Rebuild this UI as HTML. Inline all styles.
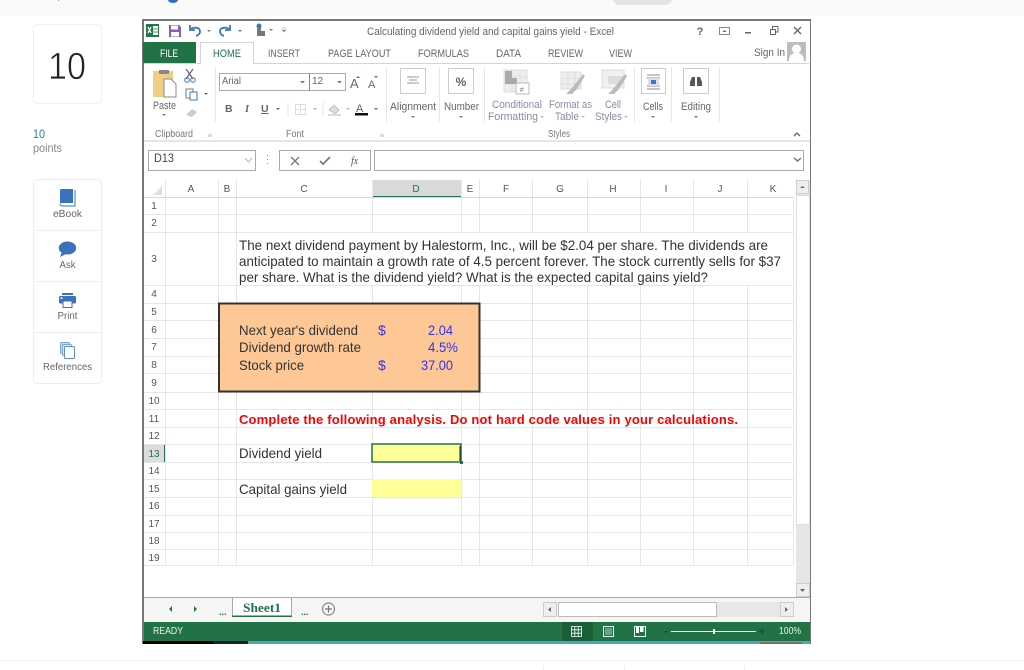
<!DOCTYPE html>
<html><head><meta charset="utf-8"><title>Calculating dividend yield</title>
<style>
html,body{margin:0;padding:0;background:#fff;width:1024px;height:670px;overflow:hidden}
svg{display:block;font-family:"Liberation Sans",Arial,sans-serif}
.u{font-size:11px;fill:#666}
.g{font-size:10.5px;fill:#777}
.h{font-size:10px;fill:#555;text-anchor:middle}
.b{font-size:14px;fill:#333}
.p{font-size:14px;fill:#3333ee}
.s{font-size:10px;fill:#666;text-anchor:middle}
</style></head><body>
<svg width="1024" height="670" viewBox="0 0 1024 670" xmlns="http://www.w3.org/2000/svg">
<!-- page top -->
<rect x="0" y="0" width="1024" height="16" fill="#fafafa"/>
<rect x="58" y="0" width="1" height="1" fill="#999"/>
<path d="M168 0h10a5 3 0 0 1-10 0z" fill="#2f6fc4"/>
<path d="M613 0h59c-1 3-3 5-7 5h-45c-4 0-6-2-7-5z" fill="#e4e3e6"/>
<!-- sidebar -->
<rect x="33.5" y="24.5" width="68" height="79" rx="4" fill="#fff" stroke="#f0f0f0"/>
<text x="48" y="79" font-size="38" fill="#222" stroke="#fff" stroke-width=".7" textLength="38" lengthAdjust="spacingAndGlyphs">10</text>
<text x="33" y="138" font-size="12" fill="#3b6fb0" textLength="12" lengthAdjust="spacingAndGlyphs">10</text>
<text x="33" y="152" font-size="12" fill="#888" textLength="29" lengthAdjust="spacingAndGlyphs">points</text>
<rect x="33.5" y="179.5" width="68" height="204" rx="4" fill="#fff" stroke="#ededed"/>
<path d="M34 230.5h67M34 281.5h67M34 332.5h67" stroke="#eee"/>
<path d="M60 190a2 2 0 0 1 2-1h11v14H62a2 2 0 0 0-2 1z" fill="#3a72bb"/><path d="M60 204a2 2 0 0 0 2 2h13v-16" fill="none" stroke="#3a72bb" stroke-width="1"/>
<text x="67.5" y="217" class="s" textLength="29" lengthAdjust="spacingAndGlyphs">eBook</text>
<ellipse cx="67.5" cy="248" rx="8.7" ry="6.5" fill="#3a72bb"/><path d="M62 252l-2 5 6-3z" fill="#3a72bb"/>
<text x="67.5" y="268" class="s" textLength="16" lengthAdjust="spacingAndGlyphs">Ask</text>
<rect x="62" y="293" width="11" height="2" fill="#3a72bb"/><rect x="59" y="296" width="17" height="7.5" rx="1.5" fill="#3a72bb"/><rect x="63" y="301" width="9" height="6.5" fill="#fff" stroke="#3a72bb"/><rect x="60.5" y="297.5" width="2" height="1.5" fill="#fff"/>
<text x="67.5" y="319" class="s" textLength="20" lengthAdjust="spacingAndGlyphs">Print</text>
<rect x="60.5" y="342.5" width="9" height="11" rx="1" fill="#cfdcef" stroke="#7fa5d6"/><rect x="62.5" y="344.5" width="9" height="11" rx="1" fill="#dfe8f5" stroke="#7fa5d6"/><rect x="64.5" y="346.5" width="10" height="12" rx="1" fill="#fff" stroke="#5f8fcc"/>
<text x="67.5" y="370" class="s" textLength="49" lengthAdjust="spacingAndGlyphs">References</text>
<!-- window -->
<rect x="143" y="20" width="667" height="621" fill="#fff"/>
<rect x="142" y="19" width="669" height="2" fill="#777"/>
<rect x="142" y="19" width="2" height="625" fill="#777"/>
<rect x="810" y="19" width="1" height="625" fill="#777"/>
<!-- QAT -->
<rect x="146" y="24" width="13" height="13" fill="#1f7a45"/><rect x="153" y="26" width="5" height="9" fill="#fff"/><path d="M148 27l3 6M151 27l-3 6" stroke="#fff" stroke-width="1.3"/><path d="M153 29h5M153 32h5" stroke="#1f7a45" stroke-width=".7"/>
<path d="M169 25h10l2 2v10h-12z" fill="#8a5fb5"/><rect x="171" y="25.5" width="7" height="4" fill="#fff"/><rect x="171" y="32" width="8" height="4.500" fill="#fff"/>
<path d="M190 25v5h5M190.500 30c2-3.500 9-3 9.500 1 .3 2.500-2 4.500-4 5" fill="none" stroke="#3b78bd" stroke-width="1.800"/>
<path d="M207 30l2 2 2-2z" fill="#777"/>
<path d="M230 25v5h-5M229.500 30c-2-3.500-9-3-9.500 1-.3 2.500 2 4.500 4 5" fill="none" stroke="#3b78bd" stroke-width="1.800"/>
<path d="M238 30l2 2 2-2z" fill="#777"/>
<circle cx="259" cy="26" r="2.500" fill="#3a78b8"/><path d="M257 28h4v3h4v5h-8z" fill="#777"/>
<path d="M269 29l2 2 2-2z" fill="#777"/><path d="M282 28h4M282 30l2 2 2-2z" stroke="#999" fill="#777" stroke-width=".6"/>
<text x="367" y="35" font-size="11" fill="#666" textLength="247" lengthAdjust="spacingAndGlyphs">Calculating dividend yield and capital gains yield - Excel</text>
<text x="700" y="35" font-size="11" font-weight="bold" fill="#666" text-anchor="middle">?</text>
<rect x="719.5" y="27.5" width="10" height="7" fill="#fff" stroke="#888"/><path d="M722.5 32l2-2 2 2z" fill="#666"/>
<rect x="745" y="32" width="6" height="1.5" fill="#666"/>
<path d="M770.5 29.5h5v5h-5zM772.500 29v-2.500h5.500v5.500h-2" fill="none" stroke="#666"/>
<path d="M794 27l7 7M801 27l-7 7" stroke="#666" stroke-width="1.400"/>
<!-- tabs -->
<rect x="143" y="42" width="53" height="21" fill="#217346"/>
<text x="160" y="57" font-size="11" fill="#fff" textLength="18" lengthAdjust="spacingAndGlyphs">FILE</text>
<path d="M144 63.5h56.500V42.500h53V63.500H809" fill="#fff" stroke="#d4d4d4"/>
<text x="213" y="57" font-size="11" fill="#217346" textLength="28" lengthAdjust="spacingAndGlyphs">HOME</text>
<text x="268" y="57" class="u" textLength="32" lengthAdjust="spacingAndGlyphs">INSERT</text>
<text x="328" y="57" class="u" textLength="63" lengthAdjust="spacingAndGlyphs">PAGE LAYOUT</text>
<text x="418" y="57" class="u" textLength="51" lengthAdjust="spacingAndGlyphs">FORMULAS</text>
<text x="496" y="57" class="u" textLength="25" lengthAdjust="spacingAndGlyphs">DATA</text>
<text x="548" y="57" class="u" textLength="35" lengthAdjust="spacingAndGlyphs">REVIEW</text>
<text x="609" y="57" class="u" textLength="23" lengthAdjust="spacingAndGlyphs">VIEW</text>
<text x="754" y="56" class="u" textLength="31" lengthAdjust="spacingAndGlyphs">Sign In</text>
<rect x="787" y="42" width="19" height="19" fill="#bdbdbd"/><circle cx="796.5" cy="49" r="4.500" fill="#fff"/><path d="M789 61c0-6 3-8 7.500-8s7.500 2 7.500 8z" fill="#fff"/>
<!-- ribbon -->
<rect x="144" y="140" width="666" height="2" fill="#e6e6e6"/>
<path d="M215.500 67v55M386.500 67v55M439.500 67v55M484.500 67v55M634.500 67v55M671.500 67v55M719.500 67v55" stroke="#e8e8e8"/>
<rect x="153" y="71" width="20" height="26" fill="#f2cd85"/><rect x="159" y="70" width="10" height="4" fill="#888"/><path d="M164 79h7l5 5v13h-12z" fill="#fff" stroke="#888"/>
<path d="M186 69l7 10M193 69l-7 10" stroke="#666" stroke-width="1.200"/><circle cx="187" cy="80" r="2.300" fill="none" stroke="#3b78bd"/><circle cx="193" cy="80" r="2.300" fill="none" stroke="#3b78bd"/>
<rect x="186" y="89" width="7" height="9" fill="#fff" stroke="#778"/><rect x="190" y="92" width="7" height="8" fill="#fff" stroke="#3b78bd"/>
<path d="M204 93l2 2 2-2z" fill="#666"/>
<path d="M186 115l6-6 5 3-5 5z" fill="#ccc"/>
<text x="153" y="109" font-size="11" fill="#666" textLength="23" lengthAdjust="spacingAndGlyphs">Paste</text>
<path d="M162 114l2 2 2-2z" fill="#777"/>
<text x="155" y="137" class="g" textLength="38" lengthAdjust="spacingAndGlyphs">Clipboard</text>
<path d="M208 134h4v3h-4z" fill="#ddd"/>
<rect x="219.5" y="73.5" width="126" height="17" fill="#fff" stroke="#aaa"/><path d="M309.500 74v17" stroke="#888"/>
<text x="222" y="84" font-size="10" fill="#666" textLength="19" lengthAdjust="spacingAndGlyphs">Arial</text>
<text x="312" y="84" font-size="10" fill="#666">12</text>
<path d="M300 81l2.500 2.500 2.500-2.500zM337 81l2.500 2.500 2.500-2.500z" fill="#777"/>
<text x="350" y="88" font-size="13" fill="#666">A</text><path d="M356 78l2-2 2 2z" fill="#3b78bd"/>
<text x="368" y="88" font-size="11" fill="#666">A</text><path d="M374 76l2 2 2-2z" fill="#3b78bd"/>
<text x="225" y="112" font-size="10.500" font-weight="bold" fill="#666">B</text>
<text x="245" y="112" font-size="10.500" font-weight="bold" font-style="italic" font-family="Liberation Serif" fill="#666">I</text>
<text x="261" y="112" font-size="10.500" font-weight="bold" fill="#666" text-decoration="underline">U</text>
<path d="M276 108l2 2 2-2z" fill="#666"/>
<path d="M295.5 104.5h10v10h-10zM300.500 104.500v10M295.500 109.500h10" fill="none" stroke="#ddd"/>
<path d="M313 108l2 2 2-2z" fill="#aaa"/>
<path d="M288 102v14M323 102v14" stroke="#e5e5e5"/>
<path d="M329 110l5-5 5 5-4 4z" fill="#ddd" stroke="#aaa" stroke-width=".6"/><rect x="328" y="114" width="13" height="2" fill="#ddd"/>
<path d="M346 108l2 2 2-2z" fill="#bbb"/>
<text x="356" y="112" font-size="11" fill="#666">A</text><rect x="355" y="113" width="13" height="2.500" fill="#111"/>
<path d="M374 108l2 2 2-2z" fill="#666"/>
<text x="286" y="137" class="g" textLength="18" lengthAdjust="spacingAndGlyphs">Font</text>
<rect x="380" y="134" width="4" height="3" fill="#ddd"/>
<rect x="400.5" y="68.500" width="25" height="25" fill="#fff" stroke="#ccc"/><path d="M407 77h12M409 80h8M407 83h12" stroke="#999"/>
<text x="390" y="110" font-size="11" fill="#666" textLength="46" lengthAdjust="spacingAndGlyphs">Alignment</text><path d="M411 116l2 2 2-2z" fill="#777"/>
<rect x="448.5" y="68.500" width="25" height="25" fill="#fff" stroke="#ccc"/>
<text x="461" y="86" font-size="12" font-weight="bold" fill="#666" text-anchor="middle">%</text>
<text x="444" y="110" font-size="11" fill="#666" textLength="35" lengthAdjust="spacingAndGlyphs">Number</text><path d="M459 116l2 2 2-2z" fill="#777"/>
<rect x="504" y="70" width="23" height="22" fill="#eee" stroke="#ddd"/><path d="M504 77h23M504 84h23M512 70v22M520 70v22" stroke="#ddd"/><rect x="505" y="71" width="7" height="7" fill="#aaa"/><rect x="505" y="78" width="12" height="6" fill="#aaa"/><rect x="516" y="83" width="13" height="11" fill="#fff" stroke="#bbb"/><text x="522" y="92" font-size="8" fill="#888" text-anchor="middle">≠</text>
<rect x="561" y="72" width="20" height="17" fill="#eee" stroke="#ddd"/><path d="M561 78h20M561 84h20M568 72v17M575 72v17" stroke="#ddd"/><path d="M566 94l6-6 11-14 2 2-8 13-5 5z" fill="#bbb"/>
<rect x="602" y="70" width="22" height="18" fill="#f0f0f0" stroke="#ddd"/><rect x="608" y="76" width="16" height="8" fill="#ddd"/><path d="M608 94l6-6 11-14 2 2-8 13-5 5z" fill="#bbb"/>
<g font-size="11" fill="#8d8aa5">
<text x="492" y="108" textLength="50" lengthAdjust="spacingAndGlyphs">Conditional</text>
<text x="488" y="120" textLength="50" lengthAdjust="spacingAndGlyphs">Formatting</text>
<text x="549" y="108" textLength="43" lengthAdjust="spacingAndGlyphs">Format as</text>
<text x="555" y="120" textLength="24" lengthAdjust="spacingAndGlyphs">Table</text>
<text x="605" y="108" textLength="16" lengthAdjust="spacingAndGlyphs">Cell</text>
<text x="595" y="120" textLength="27" lengthAdjust="spacingAndGlyphs">Styles</text>
</g>
<path d="M540 116l2 2 2-2zM581 116l2 2 2-2zM624 116l2 2 2-2z" fill="#bbb"/>
<text x="548" y="137" class="g" textLength="22" lengthAdjust="spacingAndGlyphs">Styles</text>
<rect x="641.5" y="68.500" width="24" height="25" fill="#fff" stroke="#ccc"/>
<path d="M647 75h13M647 78h13M647 86h13M647 89h13" stroke="#889"/><rect x="648" y="78" width="11" height="8" fill="#dde"/><rect x="651" y="80" width="5" height="4" fill="#3b78bd"/>
<text x="643" y="110" font-size="11" fill="#666" textLength="20" lengthAdjust="spacingAndGlyphs">Cells</text><path d="M651 116l2 2 2-2z" fill="#777"/>
<rect x="683.5" y="68.500" width="25" height="25" fill="#fff" stroke="#ccc"/>
<path d="M690 86v-4l2-5h3v9zM697 86v-9h3l2 5v4z" fill="#555"/>
<text x="681" y="110" font-size="11" fill="#666" textLength="30" lengthAdjust="spacingAndGlyphs">Editing</text><path d="M694 116l2 2 2-2z" fill="#777"/>
<path d="M794 136l3-3 3 3" fill="none" stroke="#666" stroke-width="1.300"/>
<!-- formula bar -->
<rect x="148.5" y="150.500" width="107" height="20" fill="#fff" stroke="#aaa"/>
<text x="154" y="162" font-size="11.500" fill="#444" textLength="20" lengthAdjust="spacingAndGlyphs">D13</text>
<path d="M245 158l3.500 4 3.500-4" fill="none" stroke="#bbb"/>
<path d="M267 155h1v1h-1zM267 159h1v1h-1zM267 163h1v1h-1z" fill="#888"/>
<rect x="279.5" y="150.500" width="91" height="20" fill="#fff" stroke="#aaa"/>
<path d="M291 157l8 8M299 157l-8 8" stroke="#777" stroke-width="1.300"/>
<path d="M320 161l3 3 7-7" fill="none" stroke="#777" stroke-width="1.700"/>
<text x="351" y="164" font-size="10" font-style="italic" font-family="Liberation Serif" fill="#555">fx</text>
<rect x="374.5" y="150.500" width="429" height="20" fill="#fff" stroke="#aaa"/>
<path d="M794 158l3.500 3 3.500-3" fill="none" stroke="#666" stroke-width="1.300"/>
<!-- sheet headers -->
<rect x="372" y="180" width="89" height="16" fill="#d9d9d9"/><rect x="372" y="196" width="89" height="1.500" fill="#217346"/>
<path d="M162 186v9h-9z" fill="#e0e0e0"/>
<rect x="144" y="445" width="20" height="17" fill="#dcdcdc"/><rect x="164" y="444" width="1.500" height="18" fill="#217346"/>
<!-- grid -->
<g stroke="#e6e6e6" stroke-width="1">
<path d="M165.5 180V565.500M218.500 180V565.500M236.500 180V565.500M372.500 180V565.500M461.500 180V565.500M479.500 180V565.500M532.500 180V565.500M587.500 180V565.500M640.500 180V565.500M693.500 180V565.500M747.500 180V565.500M793.500 197V565.500"/>
<path d="M144 214.5H793M144 232.500H793M144 285.500H793M144 303.500H793M144 320.500H793M144 338.500H793M144 356.500H793M144 373.500H793M144 392.500H793M144 409.500H793M144 427.500H793M144 444.500H793M144 462.500H793M144 479.500H793M144 497.500H793M144 515.500H793M144 532.500H793M144 549.500H793M144 565.500H793"/>
<path d="M144 197.5H793" stroke="#d8d8d8"/>
</g>
<!-- merged text cell -->
<rect x="237" y="233" width="556" height="52" fill="#fff"/>
<!-- headers text -->
<text x="191" y="192" class="h">A</text><text x="227" y="192" class="h">B</text><text x="304" y="192" class="h">C</text>
<text x="416" y="192" class="h" style="fill:#217346">D</text>
<text x="470" y="192" class="h">E</text><text x="506" y="192" class="h">F</text><text x="560" y="192" class="h">G</text><text x="613" y="192" class="h">H</text><text x="666" y="192" class="h">I</text><text x="720" y="192" class="h">J</text><text x="773" y="192" class="h">K</text>
<text x="154" y="209" class="h">1</text><text x="154" y="226" class="h">2</text><text x="154" y="262" class="h">3</text><text x="154" y="297" class="h">4</text><text x="154" y="315" class="h">5</text><text x="154" y="333" class="h">6</text><text x="154" y="350" class="h">7</text><text x="154" y="368" class="h">8</text><text x="154" y="386" class="h">9</text><text x="154" y="404" class="h">10</text><text x="154" y="422" class="h">11</text><text x="154" y="439" class="h">12</text><text x="154" y="457" class="h" style="fill:#217346">13</text><text x="154" y="474" class="h">14</text><text x="154" y="492" class="h">15</text><text x="154" y="509" class="h">16</text><text x="154" y="527" class="h">17</text><text x="154" y="544" class="h">18</text><text x="154" y="561" class="h">19</text>
<!-- question -->
<text x="239" y="250" class="b" textLength="529" lengthAdjust="spacingAndGlyphs">The next dividend payment by Halestorm, Inc., will be $2.04 per share. The dividends are</text>
<text x="239" y="266" class="b" textLength="542" lengthAdjust="spacingAndGlyphs">anticipated to maintain a growth rate of 4.5 percent forever. The stock currently sells for $37</text>
<text x="239" y="282" class="b" textLength="469" lengthAdjust="spacingAndGlyphs">per share. What is the dividend yield? What is the expected capital gains yield?</text>
<!-- box -->
<rect x="219" y="303.5" width="260.500" height="88" fill="#fdc895" stroke="#333" stroke-width="2"/>
<text x="239" y="335" class="b" textLength="119" lengthAdjust="spacingAndGlyphs">Next year's dividend</text>
<text x="239" y="352" class="b" textLength="122" lengthAdjust="spacingAndGlyphs">Dividend growth rate</text>
<text x="239" y="370" class="b" textLength="65" lengthAdjust="spacingAndGlyphs">Stock price</text>
<text x="378" y="335" class="p">$</text><text x="428" y="335" class="p" textLength="25" lengthAdjust="spacingAndGlyphs">2.04</text>
<text x="428" y="352" class="p" textLength="30" lengthAdjust="spacingAndGlyphs">4.5%</text>
<text x="378" y="370" class="p">$</text><text x="421" y="370" class="p" textLength="32" lengthAdjust="spacingAndGlyphs">37.00</text>
<text x="239" y="424" font-size="13" font-weight="bold" fill="#f00" textLength="499" lengthAdjust="spacing">Complete the following analysis. Do not hard code values in your calculations.</text>
<text x="239" y="458" class="b" textLength="83" lengthAdjust="spacingAndGlyphs">Dividend yield</text>
<text x="239" y="494" class="b" textLength="108" lengthAdjust="spacingAndGlyphs">Capital gains yield</text>
<!-- yellow cells -->
<rect x="372" y="444" width="89" height="18" fill="#ffff99" stroke="#217346" stroke-width="1.500"/>
<rect x="459.5" y="446" width="1" height="15" fill="#222"/>
<rect x="460" y="461" width="3" height="3" fill="#217346"/>
<rect x="372" y="479" width="89" height="18" fill="#ffff99"/>
<!-- v scrollbar -->
<rect x="796" y="180" width="14" height="417" fill="#e6e6e6"/>
<rect x="796.5" y="180.500" width="12" height="13" fill="#eee" stroke="#ccc"/><path d="M800 188l2.500-2 2.500 2z" fill="#666"/>
<rect x="796.5" y="195.500" width="13" height="329" fill="#fff" stroke="#ddd"/>
<rect x="796.5" y="583.500" width="13" height="13" fill="#eee" stroke="#ccc"/><path d="M800 589l2.500 3 2.500-3z" fill="#666"/>
<!-- tab bar -->
<rect x="144" y="597" width="666" height="25" fill="#f5f5f5"/>
<rect x="144" y="597" width="666" height="1" fill="#aaa"/>
<path d="M232.5 597.500V616M291.500 597.500V616" stroke="#aaa"/>
<rect x="233" y="598" width="58" height="18" fill="#fff"/>
<rect x="232" y="615.5" width="60" height="1.500" fill="#217346"/>
<text x="243" y="612" font-family="Liberation Serif" font-size="13" font-weight="bold" fill="#217346" textLength="38" lengthAdjust="spacingAndGlyphs">Sheet1</text>
<path d="M172 606l-3 3 3 3zM194 606l3 3-3 3z" fill="#217346"/>
<text x="219" y="615" font-size="9" font-weight="bold" fill="#217346">...</text>
<text x="301" y="615" font-size="9" font-weight="bold" fill="#217346">...</text>
<circle cx="328.5" cy="609" r="6" fill="#f5f5f5" stroke="#888" stroke-width="1.200"/><path d="M325 609h7M328.500 605.500v7" stroke="#777" stroke-width="1.200"/>
<rect x="543.5" y="602.500" width="13" height="14" fill="#eee" stroke="#ccc"/><path d="M551 607l-3 2.500 3 2.500z" fill="#666"/>
<rect x="558" y="602" width="222" height="15" fill="#e8e8e8"/>
<rect x="558.5" y="602.500" width="158" height="14" fill="#fff" stroke="#bbb"/>
<rect x="780.5" y="602.500" width="13" height="14" fill="#eee" stroke="#ccc"/><path d="M785 607l3 2.500-3 2.500z" fill="#666"/>
<!-- status -->
<rect x="144" y="622" width="666" height="19" fill="#217346"/>
<text x="153" y="634" font-size="10" fill="#e8f0ea" textLength="30" lengthAdjust="spacingAndGlyphs">READY</text>
<rect x="562" y="622" width="31" height="19" fill="#1a5f38"/>
<path d="M571.5 626.500h10v10h-10zM574.800 626.500v10M578.200 626.500v10M571.500 629.800h10M571.500 633.200h10" fill="none" stroke="#fff" stroke-width=".8"/>
<rect x="603.5" y="626.500" width="10" height="10" fill="none" stroke="#dfe"/><rect x="605.500" y="628.500" width="6" height="6" fill="#bcd" opacity=".5" stroke="#dfe" stroke-width=".6"/>
<rect x="634.5" y="626.500" width="11" height="10" fill="none" stroke="#dfe"/><rect x="636" y="627" width="3" height="6" fill="#fff"/><rect x="640" y="627" width="3.500" height="5" fill="#fff"/>
<rect x="663" y="631" width="5" height="1.500" fill="#0f5a30"/><rect x="671" y="631" width="85" height="1" fill="#fff"/><rect x="713" y="629" width="2" height="5" fill="#fff"/>
<path d="M759 631.5h6M762 628.500v6" stroke="#0f5a30" stroke-width="1.500"/>
<text x="779" y="634" font-size="10" fill="#e8f0ea" textLength="22" lengthAdjust="spacingAndGlyphs">100%</text>
<!-- strip -->
<rect x="143" y="641" width="667" height="3" fill="#4aa8b8"/>
<rect x="143" y="641" width="70" height="3" fill="#000"/>
<rect x="213" y="641" width="35" height="3" fill="#10222a"/>
<rect x="760" y="642.500" width="42" height="1.500" fill="#b5483f"/>
<!-- bottom -->
<rect x="0" y="660" width="1024" height="1" fill="#f0f0f0"/>
<path d="M543.5 666v4M624.500 666v4M744.500 666v4" stroke="#eee"/>
</svg>
</body></html>
